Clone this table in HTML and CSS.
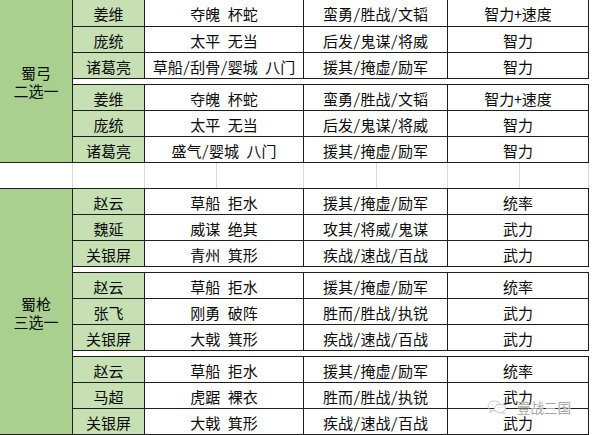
FILE: index.html
```html
<!DOCTYPE html>
<html lang="zh-CN">
<head>
<meta charset="utf-8">
<title>蜀弓 蜀枪</title>
<link rel="stylesheet" href="styles.css">
</head>
<body>
<div class="sheet">
  <div class="group g1">
    <div class="cat"><span>蜀弓</span><span>二选一</span></div>
    <div class="rows">
      <div class="sub">
        <div class="row"><div class="c cb">姜维</div><div class="c cc">夺魄 杯蛇</div><div class="c cd">蛮勇/胜战/文韬</div><div class="c ce">智力+速度</div></div>
        <div class="row"><div class="c cb">庞统</div><div class="c cc">太平 无当</div><div class="c cd">后发/鬼谋/将威</div><div class="c ce">智力</div></div>
        <div class="row"><div class="c cb">诸葛亮</div><div class="c cc">草船/刮骨/婴城 八门</div><div class="c cd">援其/掩虚/励军</div><div class="c ce">智力</div></div>
      </div>
      <div class="band"></div>
      <div class="sub">
        <div class="row"><div class="c cb">姜维</div><div class="c cc">夺魄 杯蛇</div><div class="c cd">蛮勇/胜战/文韬</div><div class="c ce">智力+速度</div></div>
        <div class="row"><div class="c cb">庞统</div><div class="c cc">太平 无当</div><div class="c cd">后发/鬼谋/将威</div><div class="c ce">智力</div></div>
        <div class="row"><div class="c cb">诸葛亮</div><div class="c cc">盛气/婴城 八门</div><div class="c cd">援其/掩虚/励军</div><div class="c ce">智力</div></div>
      </div>
    </div>
  </div>

  <div class="blank">
    <div class="g ga"></div><div class="g gb"></div><div class="g gc1"></div><div class="g gc2"></div>
    <div class="g gd1"></div><div class="g gd2"></div><div class="g ge1"></div><div class="g ge2"></div>
  </div>

  <div class="group g2">
    <div class="cat"><span>蜀枪</span><span>三选一</span></div>
    <div class="rows">
      <div class="sub">
        <div class="row"><div class="c cb">赵云</div><div class="c cc">草船 拒水</div><div class="c cd">援其/掩虚/励军</div><div class="c ce">统率</div></div>
        <div class="row"><div class="c cb">魏延</div><div class="c cc">威谋 绝其</div><div class="c cd">攻其/将威/鬼谋</div><div class="c ce">武力</div></div>
        <div class="row"><div class="c cb">关银屏</div><div class="c cc">青州 箕形</div><div class="c cd">疾战/速战/百战</div><div class="c ce">武力</div></div>
      </div>
      <div class="band"></div>
      <div class="sub">
        <div class="row"><div class="c cb">赵云</div><div class="c cc">草船 拒水</div><div class="c cd">援其/掩虚/励军</div><div class="c ce">统率</div></div>
        <div class="row"><div class="c cb">张飞</div><div class="c cc">刚勇 破阵</div><div class="c cd">胜而/胜战/执锐</div><div class="c ce">武力</div></div>
        <div class="row"><div class="c cb">关银屏</div><div class="c cc">大戟 箕形</div><div class="c cd">疾战/速战/百战</div><div class="c ce">武力</div></div>
      </div>
      <div class="band"></div>
      <div class="sub">
        <div class="row"><div class="c cb">赵云</div><div class="c cc">草船 拒水</div><div class="c cd">援其/掩虚/励军</div><div class="c ce">统率</div></div>
        <div class="row"><div class="c cb">马超</div><div class="c cc">虎踞 裸衣</div><div class="c cd">胜而/胜战/执锐</div><div class="c ce">武力</div></div>
        <div class="row"><div class="c cb">关银屏</div><div class="c cc">大戟 箕形</div><div class="c cd">疾战/速战/百战</div><div class="c ce">武力</div></div>
      </div>
    </div>
  </div>

  <div class="watermark">
    <svg class="wx" width="20" height="14" viewBox="0 0 20 14" aria-hidden="true">
      <ellipse cx="7.5" cy="6" rx="6.5" ry="5" fill="none" stroke="#c8c8c8" stroke-width="1"/>
      <path d="M3.5 10 L2.5 12.5 L6 10.8" fill="#fff" stroke="#c8c8c8" stroke-width="1"/>
      <ellipse cx="13" cy="8.5" rx="5.5" ry="4.2" fill="#fff" stroke="#c8c8c8" stroke-width="1"/>
      <path d="M16.2 11.8 L17.5 13.5 L14.5 12.5" fill="#fff" stroke="#c8c8c8" stroke-width="1"/>
      <circle cx="5.2" cy="4.6" r="0.7" fill="#c8c8c8"/>
      <circle cx="9.2" cy="4.6" r="0.7" fill="#c8c8c8"/>
      <circle cx="11.3" cy="7.6" r="0.6" fill="#c8c8c8"/>
      <circle cx="14.7" cy="7.6" r="0.6" fill="#c8c8c8"/>
    </svg>
    <span class="wm-text">壹战三国</span>
  </div>
</div>
</body>
</html>
```
FILE: styles.css
```css
html, body {
  margin: 0;
  padding: 0;
  background: #ffffff;
}

body {
  width: 592px;
  height: 435px;
  overflow: hidden;
  font-family: "Noto Sans Mono CJK SC", "Noto Sans CJK SC", "DejaVu Sans", sans-serif;
  font-size: 15px;
  color: #0a0a0a;
}

.sheet {
  position: relative;
  width: 589px;
}

.group {
  display: flex;
  align-items: stretch;
}

.cat {
  width: 73px;
  box-sizing: border-box;
  flex: 0 0 73px;
  background: #a9d08e;
  border-right: 1px solid #1e1e1e;
  border-bottom: 1px solid #1e1e1e;
  display: flex;
  flex-direction: column;
  align-items: center;
  justify-content: center;
  line-height: 18px;
  padding-top: 2px;
}

.rows {
  flex: 1 1 auto;
  display: flex;
  flex-direction: column;
}

.row {
  display: flex;
  height: 26px;
  box-sizing: border-box;
  border-bottom: 1px solid #1e1e1e;
}

.g1 .sub:first-child .row:first-child {
  height: 27px;
}

.c {
  box-sizing: border-box;
  border-right: 1px solid #1e1e1e;
  display: flex;
  align-items: center;
  justify-content: center;
  white-space: pre;
  line-height: 1;
  padding-top: 1px;
}

.cb { width: 72px; background: #c6e0b4; }
.cc { width: 159px; }
.cd { width: 144px; }
.ce { width: 141px; }

.band {
  height: 6px;
  box-sizing: border-box;
  border-bottom: 1px solid #1e1e1e;
  background: #ffffff;
}

.blank {
  display: flex;
  height: 26px;
  box-sizing: border-box;
  border-bottom: 1px solid #1e1e1e;
}

.g {
  box-sizing: border-box;
  border-right: 1px solid #d9d9d9;
}

.ga { width: 73px; }
.gb { width: 72px; }
.gc1 { width: 72px; }
.gc2 { width: 87px; }
.gd1 { width: 73px; }
.gd2 { width: 71px; }
.ge1 { width: 72px; }
.ge2 { width: 69px; }

.watermark {
  position: absolute;
  left: 487px;
  top: 400px;
  display: flex;
  align-items: center;
  gap: 10px;
}

.wm-text {
  font-family: "Noto Sans CJK SC", sans-serif;
  font-size: 13.5px;
  line-height: 14px;
  color: #a8a8a8;
  text-shadow: 0 0 1px #fff, 0 0 1px #fff;
}
```
